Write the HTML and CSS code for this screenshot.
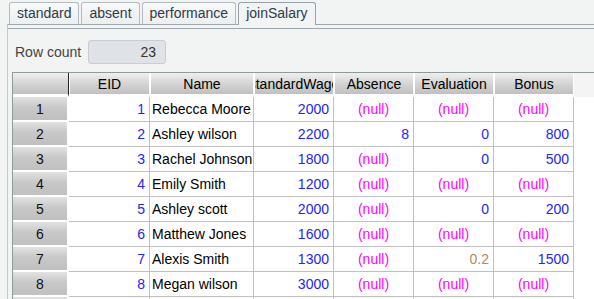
FILE: index.html
```html
<!DOCTYPE html>
<html lang="en">
  <head>
    <meta charset="UTF-8" />
    <title>joinSalary</title>
    <link rel="stylesheet" href="styles.css">
  </head>
  <body>
    <div class="tabs">
      <div class="tab">standard</div>
      <div class="tab">absent</div>
      <div class="tab">performance</div>
      <div class="tab active">joinSalary</div>
    </div>
    <div class="panel">
      <div class="inner">
        <div class="toolbar">
          <label>Row count</label>
          <div class="count">23</div>
        </div>
        <div class="pane">
          <div class="grid">
            <div class="hd corner"></div>
            <div class="hd"><span>EID</span></div>
            <div class="hd"><span>Name</span></div>
            <div class="hd"><span>standardWage</span></div>
            <div class="hd"><span>Absence</span></div>
            <div class="hd"><span>Evaluation</span></div>
            <div class="hd"><span>Bonus</span></div>
            <div class="hd fill"></div>

            <div class="rh">1</div>
            <div class="c num">1</div><div class="c txt">Rebecca Moore</div><div class="c num">2000</div>
            <div class="c null">(null)</div><div class="c null">(null)</div><div class="c null">(null)</div><div class="f"></div>

            <div class="rh">2</div>
            <div class="c num">2</div><div class="c txt">Ashley wilson</div><div class="c num">2200</div>
            <div class="c num">8</div><div class="c num">0</div><div class="c num">800</div><div class="f"></div>

            <div class="rh">3</div>
            <div class="c num">3</div><div class="c txt">Rachel Johnson</div><div class="c num">1800</div>
            <div class="c null">(null)</div><div class="c num">0</div><div class="c num">500</div><div class="f"></div>

            <div class="rh">4</div>
            <div class="c num">4</div><div class="c txt">Emily Smith</div><div class="c num">1200</div>
            <div class="c null">(null)</div><div class="c null">(null)</div><div class="c null">(null)</div><div class="f"></div>

            <div class="rh">5</div>
            <div class="c num">5</div><div class="c txt">Ashley scott</div><div class="c num">2000</div>
            <div class="c null">(null)</div><div class="c num">0</div><div class="c num">200</div><div class="f"></div>

            <div class="rh">6</div>
            <div class="c num">6</div><div class="c txt">Matthew Jones</div><div class="c num">1600</div>
            <div class="c null">(null)</div><div class="c null">(null)</div><div class="c null">(null)</div><div class="f"></div>

            <div class="rh">7</div>
            <div class="c num">7</div><div class="c txt">Alexis Smith</div><div class="c num">1300</div>
            <div class="c null">(null)</div><div class="c dec">0.2</div><div class="c num">1500</div><div class="f"></div>

            <div class="rh">8</div>
            <div class="c num">8</div><div class="c txt">Megan wilson</div><div class="c num">3000</div>
            <div class="c null">(null)</div><div class="c null">(null)</div><div class="c null">(null)</div><div class="f"></div>

            <!-- next row only peeks in at the bottom edge -->
            <div class="rh"></div>
            <div class="c"></div><div class="c"></div><div class="c"></div>
            <div class="c"></div><div class="c"></div><div class="c"></div><div class="f"></div>
          </div>
        </div>
      </div>
    </div>
  </body>
</html>
```

FILE: styles.css
```css
html,
body {
  margin: 0;
  height: 100%;
  overflow: hidden;
}
body {
  font-family: "Liberation Sans", Arial, sans-serif;
  font-size: 14px;
  background: #f2f3f3;
  color: #000;
}
.tabs {
  display: flex;
  gap: 2px;
  padding: 2px 0 0 9px;
  height: 22px;
}
.tab {
  box-sizing: border-box;
  height: 22px;
  line-height: 21px;
  padding: 0 7px;
  border: 1px solid #b3bbc0;
  border-bottom: none;
  border-radius: 3px 3px 0 0;
  background: linear-gradient(#f8f9f9, #eceeef);
  color: #2f3b49;
}
.tab.active {
  height: 23px;
  margin-bottom: -1px;
  position: relative;
  z-index: 1;
  border-color: #98a3a9;
  background: #f2f3f3;
}
.panel {
  margin-left: 7px;
  border-top: 1px solid #9ea7ac;
  border-left: 1px solid #c3c9cc;
  height: 100%;
}
.inner {
  margin-top: 3px;
  border-top: 1px solid #9ea7ac;
}
.toolbar {
  display: flex;
  align-items: center;
  gap: 7px;
  padding: 11px 0 0 7px;
  color: #444;
}
.count {
  box-sizing: border-box;
  width: 78px;
  height: 24px;
  line-height: 22px;
  padding-right: 9px;
  text-align: right;
  background: #dfe2e7;
  border: 1px solid #c9cdd2;
  border-radius: 3px;
  color: #333;
}
.pane {
  margin: 8px 0 0 4px;
  border-top: 1px solid #8e9b9b;
  border-left: 1px solid #8e9b9b;
  background: #fff;
}
.grid {
  display: grid;
  grid-template-columns: 56px 81px 104px 80px 80px 80px 80px 1fr;
  grid-template-rows: 24px;
  grid-auto-rows: 25px;
}
.hd {
  box-sizing: border-box;
  display: flex;
  justify-content: center;
  align-items: center;
  overflow: hidden;
  white-space: nowrap;
  border-bottom: 3px solid #fff;
  border-right: 1px solid #fff;
  background: linear-gradient(#efefef, #d2d2d2 55%, #c0c0c0);
}
.hd + .hd {
  border-left: 1px solid #fff;
}
.hd.corner {
  border-right: 1px solid #222;
}
.hd.fill {
  background: #f4f4f4;
  border: none;
}
.rh {
  box-sizing: border-box;
  display: flex;
  justify-content: center;
  align-items: center;
  border-bottom: 2px solid #fff;
  border-right: 2px solid #fff;
  background: linear-gradient(#e2e2e2, #c8c8c8 45%, #c0c0c0);
  color: #111;
}
.c {
  box-sizing: border-box;
  display: flex;
  align-items: center;
  overflow: hidden;
  white-space: nowrap;
  border-right: 1px solid #c0c0c0;
  border-bottom: 1px solid #c0c0c0;
}
.num,
.dec {
  justify-content: flex-end;
  padding-right: 4px;
  color: #2323ff;
}
.dec {
  color: #b88660;
}
.txt {
  padding-left: 2px;
}
.null {
  justify-content: center;
  color: #ff00ff;
}
```
